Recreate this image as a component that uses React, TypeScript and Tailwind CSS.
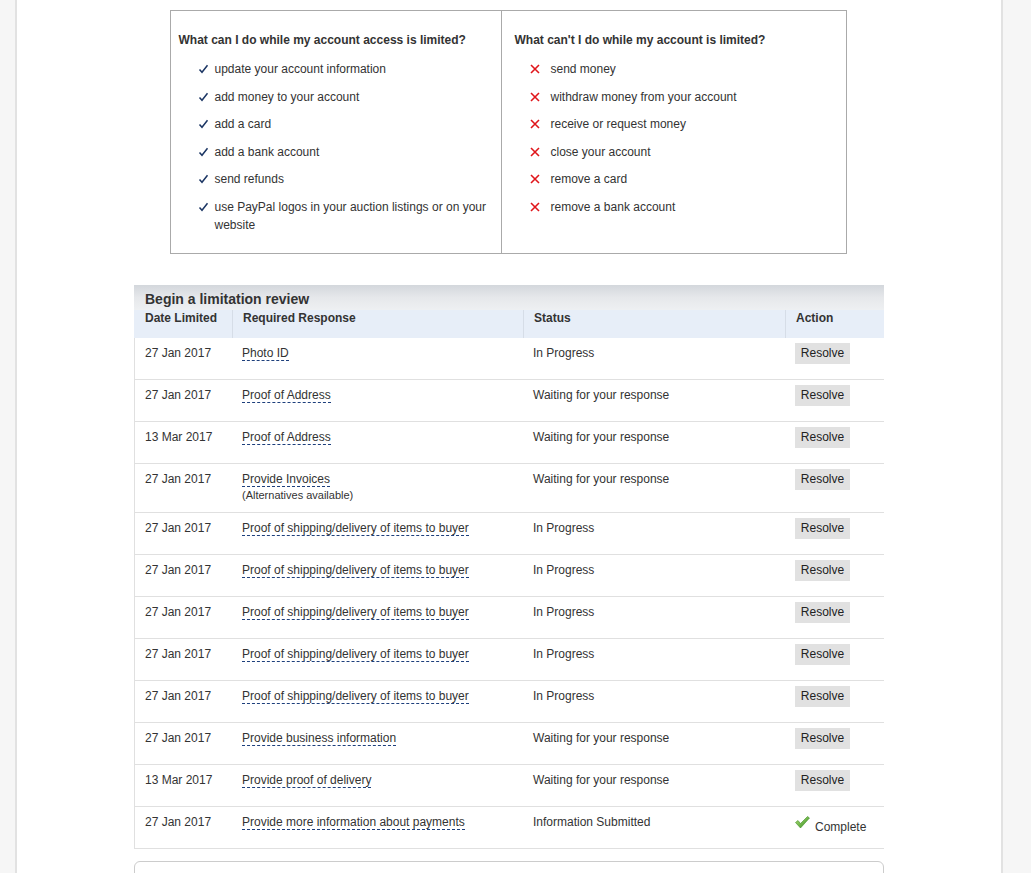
import React from "react";

type Row = {
  date: string;
  response: string;
  note?: string;
  status: string;
  done?: boolean;
};

const canDo = [
  "update your account information",
  "add money to your account",
  "add a card",
  "add a bank account",
  "send refunds",
  "use PayPal logos in your auction listings or on your website",
];

const cantDo = [
  "send money",
  "withdraw money from your account",
  "receive or request money",
  "close your account",
  "remove a card",
  "remove a bank account",
];

const shipping = "Proof of shipping/delivery of items to buyer";

const rows: Row[] = [
  { date: "27 Jan 2017", response: "Photo ID", status: "In Progress" },
  { date: "27 Jan 2017", response: "Proof of Address", status: "Waiting for your response" },
  { date: "13 Mar 2017", response: "Proof of Address", status: "Waiting for your response" },
  {
    date: "27 Jan 2017",
    response: "Provide Invoices",
    note: "(Alternatives available)",
    status: "Waiting for your response",
  },
  { date: "27 Jan 2017", response: shipping, status: "In Progress" },
  { date: "27 Jan 2017", response: shipping, status: "In Progress" },
  { date: "27 Jan 2017", response: shipping, status: "In Progress" },
  { date: "27 Jan 2017", response: shipping, status: "In Progress" },
  { date: "27 Jan 2017", response: shipping, status: "In Progress" },
  { date: "27 Jan 2017", response: "Provide business information", status: "Waiting for your response" },
  { date: "13 Mar 2017", response: "Provide proof of delivery", status: "Waiting for your response" },
  {
    date: "27 Jan 2017",
    response: "Provide more information about payments",
    status: "Information Submitted",
    done: true,
  },
];

function Tick() {
  return (
    <svg width="11" height="10" viewBox="0 0 11 10" className="shrink-0">
      <path d="M1.5 5.5 L4 8.3 L9.5 1.2" fill="none" stroke="#1b3563" strokeWidth="1.5" />
    </svg>
  );
}

function Cross() {
  return (
    <svg width="10" height="10" viewBox="0 0 10 10" className="shrink-0">
      <path d="M1 1 L9 9 M9 1 L1 9" fill="none" stroke="#e0161b" strokeWidth="1.6" />
    </svg>
  );
}

function GreenCheck() {
  return (
    <svg width="15" height="13" viewBox="0 0 15 13" className="shrink-0">
      <defs>
        <linearGradient id="gc" x1="0" y1="0" x2="1" y2="1">
          <stop offset="0" stopColor="#b6e37a" />
          <stop offset="1" stopColor="#2f8a1c" />
        </linearGradient>
      </defs>
      <path d="M0.5 6.5 L3 4.5 L5.5 7.5 L12.5 0.5 L14.5 2 L5.5 12 Z" fill="url(#gc)" stroke="#3f8f27" strokeWidth="0.6" />
    </svg>
  );
}

export default function App() {
  return (
    <div
      className="min-h-screen bg-[#f6f6f6] text-[12px] text-[#333]"
      style={{ fontFamily: '"Liberation Sans", Arial, sans-serif' }}
    >
      <div className="mx-[15px] min-h-screen w-[988px] border-x-2 border-[#e2e2e2] bg-white pt-[10px] pb-[40px]">
        {/* limitation info box */}
        <div className="relative -left-[1px] mx-auto flex w-[677px] border border-[#aaa]">
          <div className="w-[331px] border-r border-[#aaa] pl-[8px] pr-[8px] pt-[22px] pb-[19px]">
            <h3 className="text-[12px] font-bold leading-[15px]">
              What can I do while my account access is limited?
            </h3>
            <ul className="mt-[12px] flex flex-col gap-[9.6px] pl-[19px]">
              {canDo.map((item) => (
                <li key={item} className="flex items-start gap-[6px] leading-[18px]">
                  <span className="mt-[4px]">
                    <Tick />
                  </span>
                  <span>{item}</span>
                </li>
              ))}
            </ul>
          </div>
          <div className="flex-1 pl-[13px] pt-[22px]">
            <h3 className="text-[12px] font-bold leading-[15px]">
              What can't I do while my account is limited?
            </h3>
            <ul className="mt-[12px] flex flex-col gap-[9.6px] pl-[15px]">
              {cantDo.map((item) => (
                <li key={item} className="flex items-start gap-[11px] leading-[18px]">
                  <span className="mt-[4px]">
                    <Cross />
                  </span>
                  <span>{item}</span>
                </li>
              ))}
            </ul>
          </div>
        </div>

        {/* review table */}
        <div className="mx-auto mt-[31px] w-[750px]">
          <div className="h-[25px] bg-gradient-to-b from-[#d3d7dc] via-[#e6e8eb] to-[#eef0f2] pl-[11px] pt-[6px]">
            <h2 className="text-[14px] font-bold leading-[16px] text-[#333]">Begin a limitation review</h2>
          </div>
          <div className="grid h-[28px] grid-cols-[98px_291px_262px_99px] bg-[#e7eef8] font-bold leading-[15px]">
            <div className="pl-[11px] pt-[1px]">Date Limited</div>
            <div className="border-l border-[#d6dde7] pl-[10px] pt-[1px]">Required Response</div>
            <div className="border-l border-[#d6dde7] pl-[10px] pt-[1px]">Status</div>
            <div className="border-l border-[#d6dde7] pl-[10px] pt-[1px]">Action</div>
          </div>
          <div className="border-l border-[#e0e0e0]">
            {rows.map((row, i) => (
              <div
                key={i}
                className={`grid grid-cols-[98px_291px_262px_98px] border-b border-[#e0e0e0] ${
                  row.note ? "h-[49px]" : "h-[42px]"
                }`}
              >
                <div className="pl-[10px] pt-[8px] leading-[15px]">{row.date}</div>
                <div className="pl-[9px] pt-[8px] leading-[15px]">
                  <a className="inline-block border-b border-dashed border-[#1d3f7c] leading-[14px] text-[#333]">
                    {row.response}
                  </a>
                  {row.note && <div className="mt-[2px] text-[11px] leading-[13px]">{row.note}</div>}
                </div>
                <div className="pl-[9px] pt-[8px] leading-[15px]">{row.status}</div>
                <div className="pl-[9px] pt-[5px]">
                  {row.done ? (
                    <div className="flex items-start gap-[5px] pt-[4px]">
                      <GreenCheck />
                      <span className="mt-[4px] leading-[15px]">Complete</span>
                    </div>
                  ) : (
                    <button className="h-[21px] w-[55px] bg-[#e1e1e1] text-[12px] leading-[21px] text-[#222]">
                      Resolve
                    </button>
                  )}
                </div>
              </div>
            ))}
          </div>
          <div className="mt-[12px] h-[40px] rounded-t-[6px] border border-[#ccc]" />
        </div>
      </div>
    </div>
  );
}
